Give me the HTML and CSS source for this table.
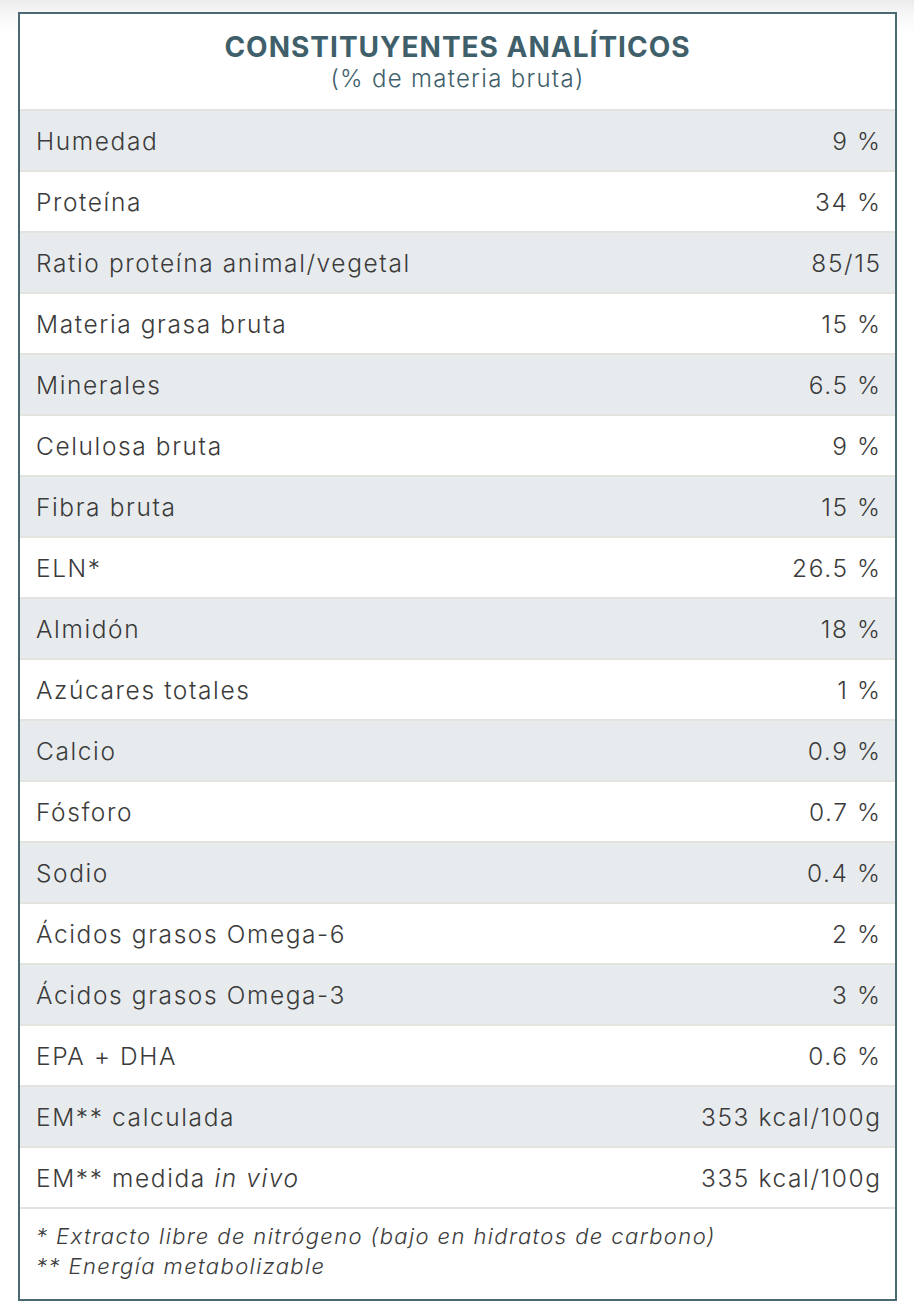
FILE: index.html
```html
<!DOCTYPE html>
<html lang="es">
<head>
<meta charset="utf-8">
<title>Constituyentes analíticos</title>
<link rel="stylesheet" href="styles.css">
</head>
<body>
<div class="page">
  <section class="card">
    <header class="card-head">
      <h1 class="title">CONSTITUYENTES ANALÍTICOS</h1>
      <p class="subtitle">(% de materia bruta)</p>
    </header>
    <div class="rows">
      <div class="row alt"><span>Humedad</span><span>9 %</span></div>
      <div class="row"><span>Proteína</span><span>34 %</span></div>
      <div class="row alt"><span>Ratio proteína animal/vegetal</span><span>85/15</span></div>
      <div class="row"><span>Materia grasa bruta</span><span>15 %</span></div>
      <div class="row alt"><span>Minerales</span><span>6.5 %</span></div>
      <div class="row"><span>Celulosa bruta</span><span>9 %</span></div>
      <div class="row alt"><span>Fibra bruta</span><span>15 %</span></div>
      <div class="row"><span>ELN*</span><span>26.5 %</span></div>
      <div class="row alt"><span>Almidón</span><span>18 %</span></div>
      <div class="row"><span>Azúcares totales</span><span>1 %</span></div>
      <div class="row alt"><span>Calcio</span><span>0.9 %</span></div>
      <div class="row"><span>Fósforo</span><span>0.7 %</span></div>
      <div class="row alt"><span>Sodio</span><span>0.4 %</span></div>
      <div class="row"><span>Ácidos grasos Omega-6</span><span>2 %</span></div>
      <div class="row alt"><span>Ácidos grasos Omega-3</span><span>3 %</span></div>
      <div class="row"><span>EPA + DHA</span><span>0.6 %</span></div>
      <div class="row alt"><span>EM** calculada</span><span>353 kcal/100g</span></div>
      <div class="row"><span>EM** medida <em>in vivo</em></span><span>335 kcal/100g</span></div>
    </div>
    <footer class="notes">
      <p>* Extracto libre de nitrógeno (bajo en hidratos de carbono)</p>
      <p>** Energía metabolizable</p>
    </footer>
  </section>
</div>
</body>
</html>
```

FILE: styles.css
```css
html, body {
  margin: 0;
  padding: 0;
}
body {
  background: linear-gradient(#ececec 0px, #f7f7f7 14px, #ffffff 32px);
  font-family: Inter, Lato, "Liberation Sans", sans-serif;
  color: #3b3b3b;
}
.page {
  padding: 12px 17px 12px 18px;
}
.card {
  border: 2px solid #4b6973;
  background: #ffffff;
}
.card-head {
  text-align: center;
  padding: 17px 0 14px;
}
.title {
  margin: 0;
  font-size: 28px;
  line-height: 32px;
  font-weight: 700;
  color: #3f606b;
  letter-spacing: 1px;
}
.subtitle {
  margin: 0;
  font-size: 24px;
  line-height: 32px;
  font-weight: 300;
  color: #3f606b;
  letter-spacing: 1.3px;
}
.rows {
  border-top: 2px solid #e4e4df;
}
.row {
  display: flex;
  justify-content: space-between;
  align-items: center;
  height: 59px;
  padding: 0 15px 0 16px;
  border-bottom: 2px solid #e4e4df;
  font-size: 24.5px;
  font-weight: 300;
  letter-spacing: 1.6px;
}
.row.alt {
  background: #e8ebee;
}
.row > span:last-child {
  margin-right: -1.6px;
}
.row em {
  font-style: italic;
}
.notes {
  padding: 12px 16px 18px;
  font-size: 22px;
  line-height: 30px;
  font-style: italic;
  font-weight: 300;
  letter-spacing: 1.4px;
  color: #3b3b3b;
}
.notes p {
  margin: 0;
}
```
